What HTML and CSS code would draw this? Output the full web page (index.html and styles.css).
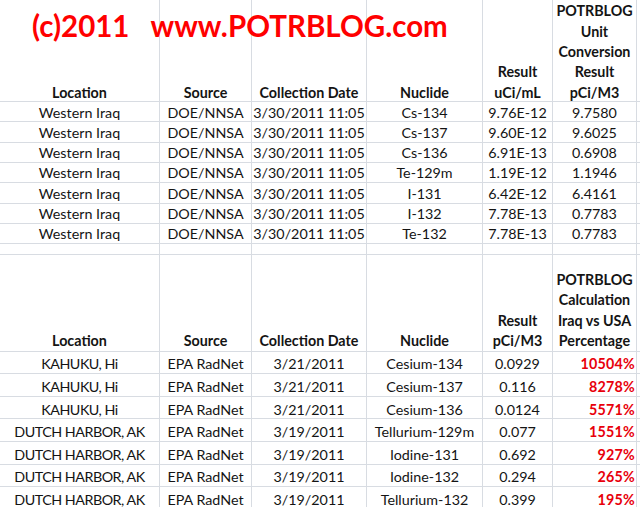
FILE: index.html
```html
<!DOCTYPE html>
<html>
<head>
<meta charset="utf-8">
<link rel="stylesheet" href="styles.css">
</head>
<body>
<div class="sheet">
  <div class="title"><span class="t1">(c)2011</span><span class="t2">www.POTRBLOG.com</span></div>
  <div class="grid">
    <!-- header 1 -->
    <div class="c h"><div class="ht">Location</div></div>
    <div class="c h"><div class="ht">Source</div></div>
    <div class="c h"><div class="ht">Collection Date</div></div>
    <div class="c h"><div class="ht">Nuclide</div></div>
    <div class="c h"><div class="ht">Result<br>uCi/mL</div></div>
    <div class="c h"><div class="ht">POTRBLOG<br>Unit<br>Conversion<br>Result<br>pCi/M3</div></div>
    <div class="c f"></div>

    <div class="c">Western Iraq</div><div class="c">DOE/NNSA</div><div class="c">3/30/2011 11:05</div><div class="c">Cs-134</div><div class="c">9.76E-12</div><div class="c">9.7580</div><div class="c f"></div>
    <div class="c">Western Iraq</div><div class="c">DOE/NNSA</div><div class="c">3/30/2011 11:05</div><div class="c">Cs-137</div><div class="c">9.60E-12</div><div class="c">9.6025</div><div class="c f"></div>
    <div class="c">Western Iraq</div><div class="c">DOE/NNSA</div><div class="c">3/30/2011 11:05</div><div class="c">Cs-136</div><div class="c">6.91E-13</div><div class="c">0.6908</div><div class="c f"></div>
    <div class="c">Western Iraq</div><div class="c">DOE/NNSA</div><div class="c">3/30/2011 11:05</div><div class="c">Te-129m</div><div class="c">1.19E-12</div><div class="c">1.1946</div><div class="c f"></div>
    <div class="c">Western Iraq</div><div class="c">DOE/NNSA</div><div class="c">3/30/2011 11:05</div><div class="c">I-131</div><div class="c">6.42E-12</div><div class="c">6.4161</div><div class="c f"></div>
    <div class="c">Western Iraq</div><div class="c">DOE/NNSA</div><div class="c">3/30/2011 11:05</div><div class="c">I-132</div><div class="c">7.78E-13</div><div class="c">0.7783</div><div class="c f"></div>
    <div class="c">Western Iraq</div><div class="c">DOE/NNSA</div><div class="c">3/30/2011 11:05</div><div class="c">Te-132</div><div class="c">7.78E-13</div><div class="c">0.7783</div><div class="c f"></div>

    <!-- blank row -->
    <div class="c"></div><div class="c"></div><div class="c"></div><div class="c"></div><div class="c"></div><div class="c"></div><div class="c f"></div>

    <!-- header 2 -->
    <div class="c h h2"><div class="ht">Location</div></div>
    <div class="c h h2"><div class="ht">Source</div></div>
    <div class="c h h2"><div class="ht">Collection Date</div></div>
    <div class="c h h2"><div class="ht">Nuclide</div></div>
    <div class="c h h2"><div class="ht">Result<br>pCi/M3</div></div>
    <div class="c h h2"><div class="ht">POTRBLOG<br>Calculation<br>Iraq vs USA<br>Percentage</div></div>
    <div class="c f"></div>

    <div class="c b caps">KAHUKU, Hi</div><div class="c b">EPA RadNet</div><div class="c b">3/21/2011</div><div class="c b">Cesium-134</div><div class="c b">0.0929</div><div class="c b pct">10504%</div><div class="c f"></div>
    <div class="c b caps">KAHUKU, Hi</div><div class="c b">EPA RadNet</div><div class="c b">3/21/2011</div><div class="c b">Cesium-137</div><div class="c b">0.116</div><div class="c b pct">8278%</div><div class="c f"></div>
    <div class="c b caps">KAHUKU, Hi</div><div class="c b">EPA RadNet</div><div class="c b">3/21/2011</div><div class="c b">Cesium-136</div><div class="c b">0.0124</div><div class="c b pct">5571%</div><div class="c f"></div>
    <div class="c b caps">DUTCH HARBOR, AK</div><div class="c b">EPA RadNet</div><div class="c b">3/19/2011</div><div class="c b">Tellurium-129m</div><div class="c b">0.077</div><div class="c b pct">1551%</div><div class="c f"></div>
    <div class="c b caps">DUTCH HARBOR, AK</div><div class="c b">EPA RadNet</div><div class="c b">3/19/2011</div><div class="c b">Iodine-131</div><div class="c b">0.692</div><div class="c b pct">927%</div><div class="c f"></div>
    <div class="c b caps">DUTCH HARBOR, AK</div><div class="c b">EPA RadNet</div><div class="c b">3/19/2011</div><div class="c b">Iodine-132</div><div class="c b">0.294</div><div class="c b pct">265%</div><div class="c f"></div>
    <div class="c b caps">DUTCH HARBOR, AK</div><div class="c b">EPA RadNet</div><div class="c b">3/19/2011</div><div class="c b">Tellurium-132</div><div class="c b">0.399</div><div class="c b pct">195%</div><div class="c f"></div>
  </div>
</div>
</body>
</html>
```

FILE: styles.css
```css
html, body {
  margin: 0;
  padding: 0;
  background: #fff;
  overflow: hidden;
}

.sheet {
  position: relative;
  width: 640px;
  height: 507px;
  overflow: hidden;
  font-family: Lato, "Open Sans", sans-serif;
  font-size: 14.3px;
  color: #141414;
}

.title {
  position: absolute;
  left: 32px;
  top: 6px;
  z-index: 2;
  font-size: 29.5px;
  font-weight: bold;
  color: #f00;
  white-space: nowrap;
  line-height: 40px;
}

.t2 {
  margin-left: 21px;
}

.grid {
  display: grid;
  grid-template-columns: 160px 92px 115px 116px 70px 84px 1fr;
  grid-template-rows: 102px repeat(7, 20.33px) 10.4px 97px repeat(7, 22.6px);
}

.c {
  box-sizing: border-box;
  border-right: 1px solid #d8dce2;
  border-bottom: 1px solid #d8dce2;
  display: flex;
  align-items: center;
  justify-content: center;
  white-space: nowrap;
  line-height: 20.33px;
  padding-top: 2px;
}

.c.f {
  border-right: none;
}

.h {
  align-items: flex-end;
  font-weight: bold;
  text-align: center;
  padding-top: 0;
  padding-bottom: 0;
}

.ht {
  margin-bottom: -2px;
}

.h2 {
  line-height: 20.5px;
  padding-bottom: 1px;
}

.b {
  padding-top: 4px;
}

.caps {
  letter-spacing: -0.5px;
}

.pct {
  justify-content: flex-end;
  color: #e8000b;
  font-weight: bold;
  padding-right: 1px;
  letter-spacing: 0.2px;
}
```
